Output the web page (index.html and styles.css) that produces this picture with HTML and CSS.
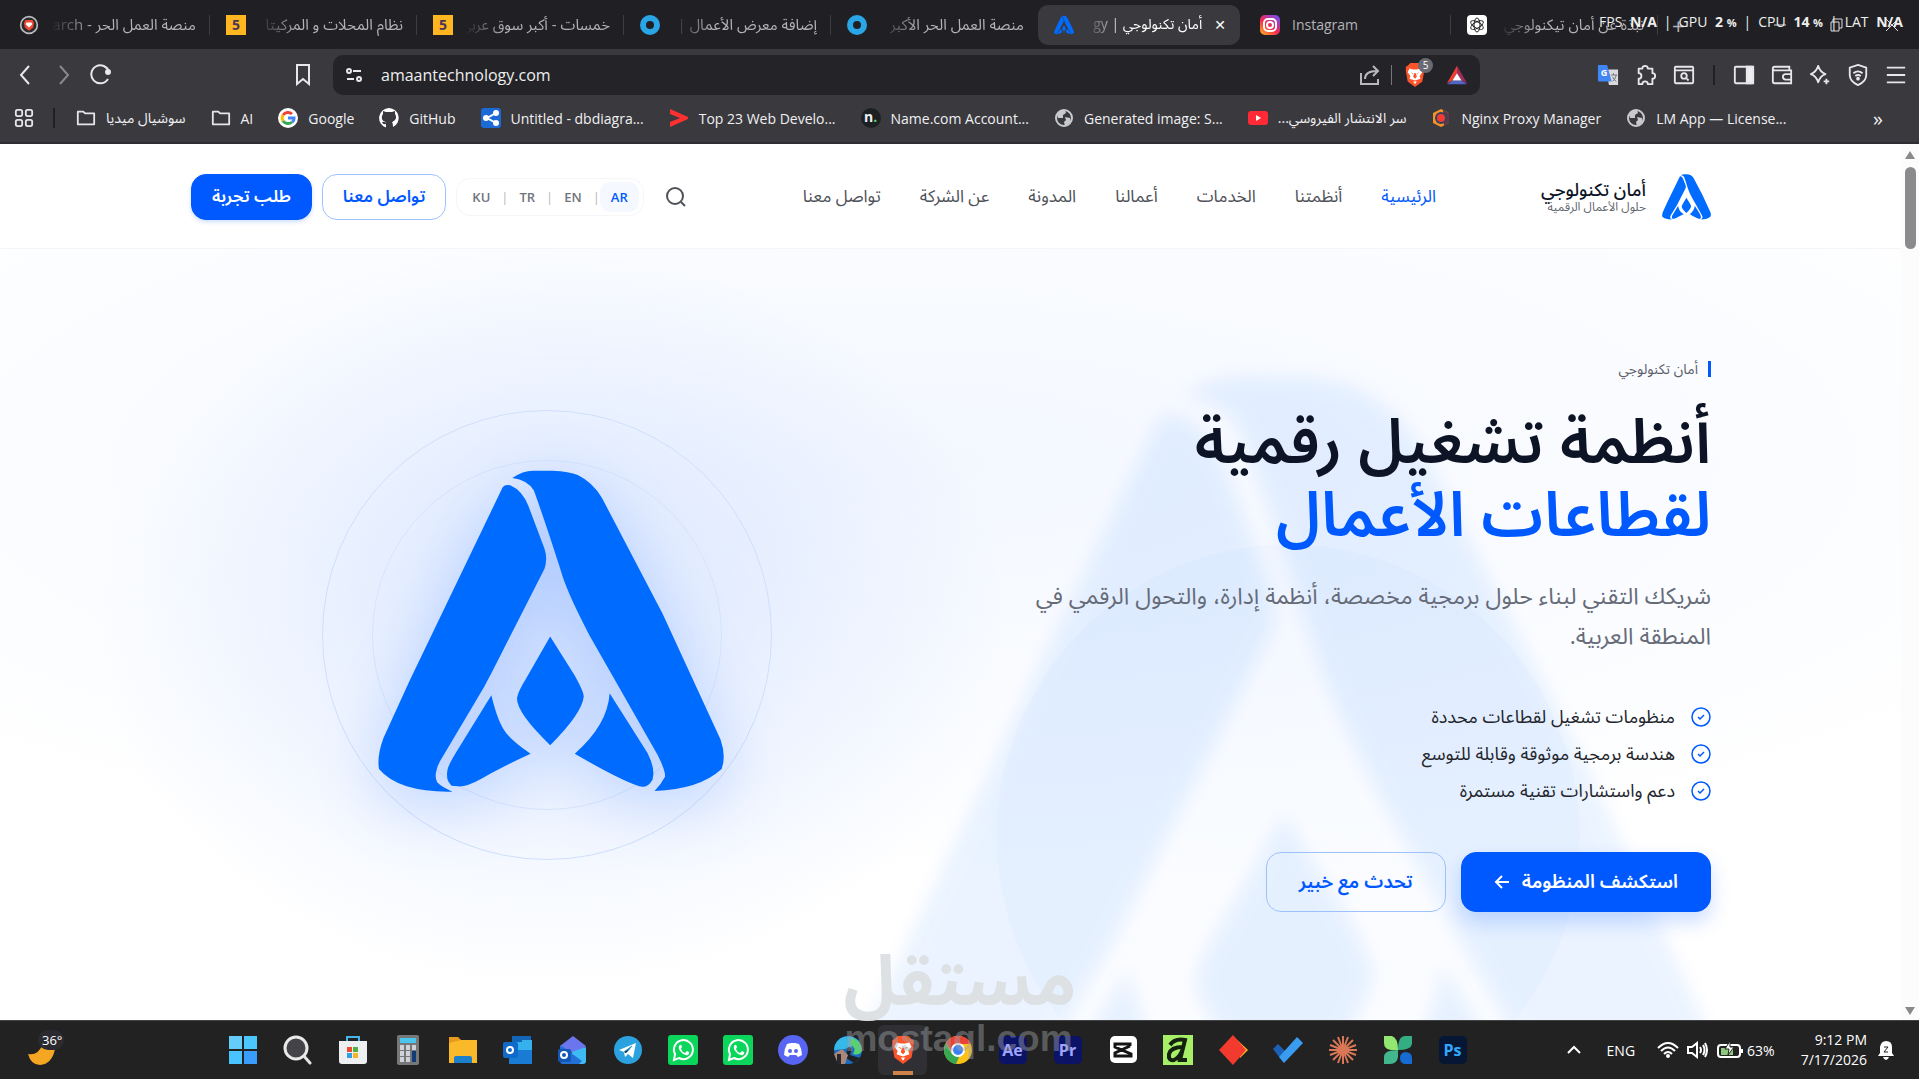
FILE: index.html
```
<!DOCTYPE html>
<html lang="ar">
<head>
  <meta charset="UTF-8">
  <meta name="viewport" content="width=device-width, initial-scale=1.0">
  <title>أمان تكنولوجي</title>
  <link rel="stylesheet" href="styles.css">
</head>
<body>
  <!-- Shared shapes -->
  <svg class="defs" aria-hidden="true">
    <symbol id="logo" viewBox="232 238 1045 972">
      <path d="M609 290Q616 280 632 284Q668 300 686 345L735 475Q745 505 735 535L575 850Q555 890 530 930L420 1115Q400 1155 412 1178Q425 1192 458 1206Q380 1208 320 1190Q265 1172 237 1138Q230 1100 250 1045L330 870Z"/>
      <path d="M638 262Q670 240 700 240L760 240Q810 242 835 253Q880 275 908 322L1090 670L1265 1050Q1282 1100 1268 1138Q1200 1200 1066 1204Q1085 1185 1098 1160Q1098 1140 1075 1095L870 735Q810 620 790 560C765 480 730 375 703 300Q685 268 638 262Z"/>
      <path d="M752 739L825 855Q853 905 853 920Q848 970 752 1066Q652 970 652 925Q655 905 680 865Z"/>
      <path d="M575 916Q595 1000 620 1030Q640 1055 693 1092Q610 1130 545 1167Q500 1192 475 1190L455 1188Q436 1170 443 1140Q446 1125 470 1086Z"/>
      <path d="M931 910L1045 1090Q1070 1140 1060 1170Q1045 1197 1020 1190Q960 1170 826 1092Q925 1005 931 910Z"/>
    </symbol>
    <symbol id="brave" viewBox="0 0 24 28">
      <path fill="#fb542b" d="M7 1h10l3 3 2 1v5l-2 11-8 6-8-6L2 10V5l2-1z"/>
      <path fill="#fff" d="M6 7l4 1h4l4-1 2 4-3 4 1 3-6 2-6-2 1-3-3-4zM10 21h4l-2 3z"/>
      <path fill="#fb542b" d="M7 11l3 1v1zM17 11l-3 1v1zM11 12h2l1 4-2 2-2-2z"/>
    </symbol>
    <symbol id="folder" viewBox="0 0 22 20">
      <path d="M2 17V3h6l2 2h10v12z" fill="none" stroke="#e6e6e8" stroke-width="2" stroke-linejoin="round"/>
    </symbol>
    <symbol id="globe" viewBox="0 0 20 20">
      <circle cx="10" cy="10" r="8" fill="#3a393e" stroke="#c9cacd" stroke-width="2"/>
      <path fill="#c9cacd" d="M3 6q4-5 8-4l1 3-3 2v3H4zM11 9l5 1 1 4-6 4-1-4 2-2z"/>
    </symbol>
    <symbol id="ring" viewBox="0 0 20 20">
      <circle cx="10" cy="10" r="7" fill="none" stroke="#2aa5e6" stroke-width="6"/>
    </symbol>
    <symbol id="check" viewBox="0 0 20 20">
      <circle cx="10" cy="10" r="9" fill="none" stroke="#0058ff" stroke-width="1.500"/>
      <path d="M7 10l2 2 4-4" fill="none" stroke="#0058ff" stroke-width="1.500"/>
    </symbol>
    <symbol id="whatsapp" viewBox="0 0 30 30">
      <rect width="30" height="30" rx="3" fill="#0bd55b"/>
      <path d="M6 25l1-6a9.500 9.500 0 1 1 4 4z" fill="none" stroke="#fff" stroke-width="2"/>
      <path d="M11 11q2-3 3 1l-1 2q1 3 4 4l2-2q4 1 1 4-4 1-7-3-3-3-2-6z" fill="#fff"/>
    </symbol>
  </svg>

  <!-- Browser tabs -->
  <div class="tabstrip">
    <button class="tab">
      <svg class="fav" viewBox="0 0 22 24"><circle cx="11" cy="12" r="10" fill="#2b2b2f" stroke="#b9babd" stroke-width="2"/><path fill="#f04b32" d="M7 6h8l2 3-1 6-5 4-5-4-1-6z"/><path fill="#fff" d="M8 9h6l1 2-4 4-4-4z"/></svg>
      <span class="tab-title" dir="rtl">منصة العمل الحر - arch</span>
    </button>
    <button class="tab">
      <span class="fav five">5</span>
      <span class="tab-title" dir="rtl">نظام المحلات و المركيتا</span>
    </button>
    <button class="tab">
      <span class="fav five">5</span>
      <span class="tab-title" dir="rtl">خمسات - أكبر سوق عربي</span>
    </button>
    <button class="tab">
      <svg class="fav"><use href="#ring"/></svg>
      <span class="tab-title" dir="rtl">إضافة معرض الأعمال |</span>
    </button>
    <button class="tab no-line">
      <svg class="fav"><use href="#ring"/></svg>
      <span class="tab-title" dir="rtl">منصة العمل الحر الأكبر</span>
    </button>
    <button class="tab active">
      <svg class="fav blue"><use href="#logo"/></svg>
      <span class="tab-title" dir="rtl">أمان تكنولوجي | gy</span>
      <span class="close">✕</span>
    </button>
    <button class="tab">
      <svg class="fav" viewBox="0 0 20 20"><defs><linearGradient id="ig" x1="0" y1="1" x2=".8" y2="0"><stop offset="0" stop-color="#ffb91a"/><stop offset=".5" stop-color="#f5274f"/><stop offset="1" stop-color="#7a4bf0"/></linearGradient></defs><rect width="20" height="20" rx="5" fill="url(#ig)"/><rect x="4" y="4" width="12" height="12" rx="4" fill="none" stroke="#fff" stroke-width="2"/><circle cx="10" cy="10" r="3" fill="none" stroke="#fff" stroke-width="2"/></svg>
      <span class="tab-title ltr">Instagram</span>
    </button>
    <button class="tab">
      <svg class="fav" viewBox="0 0 20 20"><rect width="20" height="20" rx="4" fill="#fff"/><g fill="none" stroke="#222"><ellipse cx="10" cy="10" rx="3" ry="7"/><ellipse cx="10" cy="10" rx="3" ry="7" transform="rotate(60 10 10)"/><ellipse cx="10" cy="10" rx="3" ry="7" transform="rotate(120 10 10)"/></g></svg>
      <span class="tab-title" dir="rtl">نبذة عن أمان تيكنولوجي</span>
    </button>
    <button class="newtab" aria-label="New tab">+</button>
    <div class="window-controls">
      <button aria-label="Minimize"><svg viewBox="0 0 14 14"><path d="M1 7h12"/></svg></button>
      <button aria-label="Restore"><svg viewBox="0 0 14 14"><path d="M2 4h8v9H2zM4 4V1h9v9h-3"/></svg></button>
      <button aria-label="Close"><svg viewBox="0 0 14 14"><path d="M1 1l12 12M13 1L1 13"/></svg></button>
    </div>
    <div class="stats">
      <span>FPS <b>N/A</b></span><i>|</i><span>GPU <b>2 <small>%</small></b></span><i>|</i><span>CPU <b>14 <small>%</small></b></span><i>|</i><span>LAT <b>N/A</b></span>
    </div>
  </div>

  <!-- Address bar -->
  <div class="toolbar">
    <div class="nav-buttons">
      <button aria-label="Back"><svg viewBox="0 0 22 22"><path d="M14 2l-8 9 8 9"/></svg></button>
      <button class="dim" aria-label="Forward"><svg viewBox="0 0 22 22"><path d="M8 2l8 9-8 9"/></svg></button>
      <button aria-label="Reload"><svg viewBox="0 0 22 22"><path d="M19 15a9 9 0 1 1 1-7"/><circle cx="19" cy="8" r="2" fill="#eee"/></svg></button>
    </div>
    <button class="save" aria-label="Bookmark"><svg viewBox="0 0 22 22"><path d="M5 1h12v19l-6-5-6 5z"/></svg></button>
    <div class="address">
      <svg viewBox="0 0 18 18"><circle cx="4" cy="5" r="2"/><path d="M8 5h8M2 13h7"/><circle cx="14" cy="13" r="2"/></svg>
      <input type="text" value="amaantechnology.com" aria-label="Address">
      <svg class="share" viewBox="0 0 22 22"><path d="M2 9v11h17v-5M6 15q0-8 12-8M14 2l5 5-5 5"/></svg>
      <span class="bar"></span>
      <span class="shield"><svg viewBox="0 0 24 28"><use href="#brave"/></svg><em>5</em></span>
      <svg class="bat" viewBox="0 0 24 22"><path fill="#ee3d32" stroke="none" d="M12 1v8L7 17l-6 3z"/><path fill="#9e2d5b" stroke="none" d="M12 1l11 19-6-3-5-8z"/><path fill="#5265c4" stroke="none" d="M1 21l6-4h10l6 4z"/><path fill="#fff" stroke="none" d="M12 9l5 8H7z"/></svg>
    </div>
    <div class="extensions">
      <button aria-label="Translate"><svg viewBox="0 0 24 24"><path fill="#d9dadc" stroke="none" d="M10 6h13v17H13z"/><path fill="#4285f4" stroke="none" d="M1 1h10l5 18H2q-1 0-1-1z"/><text x="4" y="13" class="icon-text">G</text><path d="M15 12h7M18 10v2M21 12q-1 5-4 7M17 14q1 3 4 5" stroke="#6b7075" stroke-width="1"/></svg></button>
      <button aria-label="Extensions"><svg viewBox="0 0 24 24"><path d="M4 5h4q0-3 3-3t3 3h5v5q3 0 3 3t-3 3v6h-5q0-3-3-3t-3 3H4v-6q3 0 3-3t-3-3z" stroke-linejoin="round"/></svg></button>
      <button aria-label="Reader"><svg viewBox="0 0 24 24"><rect x="2" y="3" width="20" height="18" rx="1"/><path d="M2 7h20M15 16l2 2"/><circle cx="12" cy="13" r="3"/></svg></button>
      <span class="bar dark"></span>
      <button aria-label="Sidebar"><svg viewBox="0 0 24 24"><rect x="2" y="3" width="20" height="18" rx="1"/><path fill="#eee" d="M15 3h7v18h-7z"/></svg></button>
      <button aria-label="Wallet"><svg viewBox="0 0 24 24"><path d="M2 4v15q0 2 2 2h18V7H4q-2 0-2-2t2-2h16v4M22 11h-6q-3 0-3 3t3 3h6"/></svg></button>
      <button aria-label="Leo"><svg viewBox="0 0 24 24"><path d="M10 2q2 7 8 9-6 2-8 9-2-7-8-9 6-2 8-9zM19 16v6M16 19h6" stroke-linejoin="round"/></svg></button>
      <button aria-label="VPN"><svg viewBox="0 0 24 24"><path d="M12 1l9 3v8q0 7-9 11-9-4-9-11V4z"/><path d="M7 10q5-4 10 0M9 13q3-2 6 0"/><circle cx="12" cy="16" r="1"/></svg></button>
      <button aria-label="Menu"><svg viewBox="0 0 24 24"><path d="M2 4h20M2 12h20M2 20h20"/></svg></button>
    </div>
  </div>

  <!-- Bookmarks -->
  <div class="bookmarks">
    <button class="apps" aria-label="Apps"><svg viewBox="0 0 22 22" fill="none" stroke="#e6e6e8" stroke-width="2"><rect x="2" y="2" width="7" height="7" rx="2"/><rect x="13" y="2" width="7" height="7" rx="2"/><rect x="2" y="13" width="7" height="7" rx="2"/><rect x="13" y="13" width="7" height="7" rx="2"/></svg></button>
    <span class="bar dark"></span>
    <a href="#" class="bm"><svg><use href="#folder"/></svg><span dir="rtl">سوشيال ميديا</span></a>
    <a href="#" class="bm"><svg><use href="#folder"/></svg>AI</a>
    <a href="#" class="bm"><svg viewBox="0 0 20 20"><circle cx="10" cy="10" r="10" fill="#fff"/><g fill="none" stroke-width="3"><path stroke="#ea4335" d="M5 7a6 6 0 0 1 9-1"/><path stroke="#fbbc05" d="M5 13a6 6 0 0 1 0-6"/><path stroke="#34a853" d="M5 13a6 6 0 0 0 9 1"/><path stroke="#4285f4" d="M10 10h6q0 3-2 4"/></g></svg>Google</a>
    <a href="#" class="bm"><svg viewBox="0 0 20 20"><path fill="#fff" d="M10 0a10 10 0 0 0-3 19.500V16q-3 1-4-2 3 2 4 0-5-1-4-6l1-2V3l3 1h6l3-1v3q3 5-3 8 1 1 1 5A10 10 0 0 0 10 0z"/><path fill="#3a393e" d="M7 19v-3q-3 0-4-2 2-1 4 1v-1q-5-2-3-7V4l3 1h6l3-1v3q2 5-3 7v5z"/></svg>GitHub</a>
    <a href="#" class="bm"><svg viewBox="0 0 20 20"><rect width="20" height="20" rx="3" fill="#1c6ad6"/><path d="M15 5L6 10l9 5" stroke="#fff" stroke-width="2" fill="none"/><g fill="#fff"><circle cx="5" cy="10" r="3"/><circle cx="15" cy="5" r="3"/><circle cx="15" cy="15" r="3"/></g></svg>Untitled - dbdiagra...</a>
    <a href="#" class="bm"><svg viewBox="0 0 20 20"><path fill="#ff3130" d="M1 1l18 8v2L1 19v-5l10-4L1 6z"/></svg>Top 23 Web Develo...</a>
    <a href="#" class="bm"><span class="n-icon">n<i>.</i></span>Name.com Account...</a>
    <a href="#" class="bm"><svg><use href="#globe"/></svg>Generated image: S...</a>
    <a href="#" class="bm"><svg viewBox="0 0 20 20"><rect y="3" width="20" height="14" rx="3" fill="#ff2a35"/><path fill="#fff" d="M8 7l5 3-5 3z"/></svg><span dir="rtl">سر الانتشار الفيروسي...</span></a>
    <a href="#" class="bm"><svg viewBox="0 0 20 20"><path fill="#f39325" d="M10 1l8 4v10l-8 4-8-4V5z"/><path fill="#5b3a45" d="M12 2l6 3v10l-5 3z"/><circle cx="10" cy="10" r="6" fill="#35405e"/><circle cx="10" cy="10" r="4" fill="#f33b30"/></svg>Nginx Proxy Manager</a>
    <a href="#" class="bm"><svg><use href="#globe"/></svg>LM App — License...</a>
    <button class="more" aria-label="More bookmarks">»</button>
  </div>

  <!-- Website -->
  <div class="viewport">
    <div class="site" dir="rtl">
      <header class="site-header">
        <a href="#" class="brand">
          <svg class="brand-logo"><use href="#logo"/></svg>
          <span><strong>أمان تكنولوجي</strong><small>حلول الأعمال الرقمية</small></span>
        </a>
        <nav class="site-nav">
          <a href="#" class="current">الرئيسية</a>
          <a href="#">أنظمتنا</a>
          <a href="#">الخدمات</a>
          <a href="#">أعمالنا</a>
          <a href="#">المدونة</a>
          <a href="#">عن الشركة</a>
          <a href="#">تواصل معنا</a>
        </nav>
        <div class="actions">
          <button class="search" aria-label="بحث"><svg viewBox="0 0 20 20"><circle cx="9" cy="9" r="8"/><path d="M15 15l4 4"/></svg></button>
          <div class="langs">
            <button class="on">AR</button><i>|</i><button>EN</button><i>|</i><button>TR</button><i>|</i><button>KU</button>
          </div>
          <button class="btn outline small">تواصل معنا</button>
          <button class="btn primary small">طلب تجربة</button>
        </div>
      </header>

      <main class="hero">
        <svg class="hero-bg" viewBox="232 238 1045 972"><use class="ghost" href="#logo" x="232" y="238" width="1045" height="972"/><circle cx="757" cy="763" r="332"/></svg>
        <section class="hero-text">
          <p class="eyebrow">أمان تكنولوجي</p>
          <h1>أنظمة تشغيل رقمية <span>لقطاعات الأعمال</span></h1>
          <p class="lead">شريكك التقني لبناء حلول برمجية مخصصة، أنظمة إدارة، والتحول الرقمي في المنطقة العربية.</p>
          <ul class="points">
            <li><svg><use href="#check"/></svg>منظومات تشغيل لقطاعات محددة</li>
            <li><svg><use href="#check"/></svg>هندسة برمجية موثوقة وقابلة للتوسع</li>
            <li><svg><use href="#check"/></svg>دعم واستشارات تقنية مستمرة</li>
          </ul>
          <div class="cta">
            <button class="btn primary">استكشف المنظومة <svg viewBox="0 0 16 16"><path d="M15 8H2M8 2L2 8l6 6"/></svg></button>
            <button class="btn outline">تحدث مع خبير</button>
          </div>
        </section>
        <div class="hero-art">
          <div class="circle"><div class="circle inner"></div></div>
          <svg class="hero-logo"><use href="#logo"/></svg>
        </div>
      </main>
    </div>
    <div class="scrollbar">
      <svg viewBox="0 0 12 10"><path d="M6 1l5 8H1z"/></svg>
      <span class="thumb"></span>
      <svg class="down" viewBox="0 0 12 10"><path d="M6 9L1 1h10z"/></svg>
    </div>
  </div>

  <!-- Taskbar -->
  <footer class="taskbar">
    <div class="weather">
      <svg viewBox="0 0 30 24"><path fill="#f5a623" d="M1 12q10 2 15-10 10 0 12 5-3 15-15 16Q4 23 1 12z"/></svg>
      <span>36°</span>
    </div>
    <div class="apps-row">
      <button aria-label="Start"><svg viewBox="0 0 30 30"><path fill="#64cdfb" d="M1 1h13v13H1z"/><path fill="#4cc6ff" d="M16 1h13v13H16z"/><path fill="#48c3ff" d="M1 16h13v13H1z"/><path fill="#3b9dfb" d="M16 16h13v13H16z"/></svg></button>
      <button aria-label="Search"><svg viewBox="0 0 30 30"><path d="M20 20l7 8" stroke="#e4e4e4" stroke-width="3" stroke-linecap="round"/><circle cx="13" cy="13" r="11" fill="#444347" stroke="#e9e9e9" stroke-width="3"/></svg></button>
      <button aria-label="Store"><svg viewBox="0 0 30 30"><path d="M9 7V2h12v5" fill="none" stroke="#46b5e8" stroke-width="2"/><path fill="#eeeff1" d="M1 6h28v20q0 3-3 3H4q-3 0-3-3z"/><path fill="#f04a33" d="M9 12h5v5H9z"/><path fill="#50b041" d="M15 12h5v5h-5z"/><path fill="#2f9fe8" d="M9 18h5v5H9z"/><path fill="#f5b42b" d="M15 18h5v5h-5z"/></svg></button>
      <button aria-label="Calculator"><svg viewBox="0 0 30 30"><rect x="4" width="22" height="30" rx="2" fill="#757779"/><path fill="#4bc5ee" d="M7 3h16v5H7z"/><path fill="#cfd2d6" d="M7 10h4v5H7zM13 10h4v5h-4zM19 10h4v5h-4zM7 16h4v5H7zM13 16h4v5h-4zM7 22h4v5H7zM13 22h4v5h-4z"/><path fill="#103c78" d="M19 16h4v11h-4z"/></svg></button>
      <button aria-label="Files"><svg viewBox="0 0 30 30"><path fill="#e79a1e" d="M1 2h9l3 3v6H1z"/><path fill="#f9b928" d="M1 8l12-3h16v23H1z"/><path fill="#1c7fc9" d="M6 28v-5q0-2 2-2h14q2 0 2 2v5z"/></svg></button>
      <button aria-label="Outlook"><svg viewBox="0 0 30 30"><path fill="#1365b8" d="M9 1h19v8H9z"/><path fill="#35b2ee" d="M9 7h10v10H9zM19 5h10v12H19z"/><path fill="#1a7bd4" d="M6 15h23v14H6z"/><rect y="7" width="15" height="16" rx="2" fill="#1169c9"/><circle cx="7" cy="15" r="3" fill="none" stroke="#fff" stroke-width="2"/></svg></button>
      <button aria-label="Outlook new"><svg viewBox="0 0 30 30"><path fill="#6b75ee" d="M2 11L15 1l13 10-9 9z"/><path fill="#3fbbf4" d="M28 12v14q0 3-3 3H8l6-12z"/><path fill="#2371d6" d="M2 10l22 16-3 3H5q-3 0-3-3z"/><rect y="14" width="13" height="13" rx="2" fill="#1358b8"/><circle cx="6" cy="20" r="3" fill="none" stroke="#fff" stroke-width="2"/></svg></button>
      <button aria-label="Telegram"><svg viewBox="0 0 30 30"><circle cx="15" cy="15" r="14" fill="#2ba2df"/><path fill="#fff" d="M6 15l17-7-3 15-5-4-3 3-1-5z"/><path stroke="#2ba2df" d="M11 17l8-6-6 7"/></svg></button>
      <button aria-label="WhatsApp"><svg><use href="#whatsapp"/></svg></button>
      <button aria-label="WhatsApp 2"><svg><use href="#whatsapp"/></svg></button>
      <button aria-label="Discord"><svg viewBox="0 0 30 30"><circle cx="15" cy="15" r="15" fill="#5865f2"/><path fill="#fff" d="M9 9l4-1h4l4 1q3 5 3 11l-4 2-2-2h-6l-2 2-4-2q0-6 3-11z"/><circle cx="12" cy="16" r="2" fill="#5865f2"/><circle cx="18" cy="16" r="2" fill="#5865f2"/></svg></button>
      <button aria-label="Edge"><svg viewBox="0 0 30 30"><circle cx="15" cy="15" r="14" fill="#1b6bc0"/><path fill="#35b9e8" d="M1 15a14 14 0 0 1 26-7L12 14z"/><path fill="#54d36f" d="M18 3q11 2 11 13-3 5-9 3 4-6-3-10z"/><path fill="#202124" d="M14 14q1-4 5 0l-2 6 10 3-6 5-8-5z"/><path fill="#a88878" d="M1 19l8-5 6 6-3 9H5z"/><path fill="#29262d" d="M4 19h4v10H4z"/></svg></button>
      <button class="running" aria-label="Brave"><svg viewBox="0 0 24 28"><use href="#brave"/></svg></button>
      <button aria-label="Chrome"><svg viewBox="0 0 30 30"><circle cx="15" cy="15" r="14" fill="#fbc116"/><path fill="#ea4335" d="M3 8a14 14 0 0 1 25 1H15l-6 8z"/><path fill="#34a853" d="M3 8l6 11 7 3-3 7A14 14 0 0 1 3 8z"/><circle cx="15" cy="15" r="7" fill="#fff"/><circle cx="15" cy="15" r="5" fill="#3b82f6"/></svg></button>
      <button aria-label="After Effects"><span class="adobe">Ae</span></button>
      <button aria-label="Premiere"><span class="adobe">Pr</span></button>
      <button aria-label="CapCut"><svg viewBox="0 0 30 30"><rect x="2" y="1" width="27" height="27" rx="5" fill="#fff"/><path d="M22 11V9H7v3l16 7v2H7v-3l15-7" fill="none" stroke="#151515" stroke-width="3"/></svg></button>
      <button aria-label="Affinity"><svg viewBox="0 0 30 30"><path fill="#a6ef67" d="M0 0h30v30H0z"/><path d="M7 10q5-7 15-5L17 25h7M20 12Q8 12 6 19q-1 7 5 6 5-2 8-9" fill="none" stroke="#14210f" stroke-width="4"/></svg></button>
      <button aria-label="Diamond"><svg viewBox="0 0 30 30"><path fill="#fbb928" d="M15 1l15 14-8 8z"/><path fill="#f23a2f" d="M15 0l13 15-13 15L1 15z"/></svg></button>
      <button aria-label="To Do"><svg viewBox="0 0 30 30"><path fill="#1b5fb6" d="M0 14l5-5 11 11-6 7z"/><path fill="#3a9cf0" d="M24 2l6 6-19 20-5-6z"/></svg></button>
      <button aria-label="Claude"><svg viewBox="0 0 30 30"><path d="M15 1v28M1 15h28M5 5l20 20M25 5L5 25M10 2l10 26M20 2L10 28M2 10l26 10M2 20l26-10" stroke="#d97757" stroke-width="2"/><circle cx="15" cy="15" r="5" fill="#d97757"/></svg></button>
      <button aria-label="Clover"><svg viewBox="0 0 30 30"><path fill="#91e770" d="M1 1h8q6 2 6 14H8Q1 14 1 8z"/><path fill="#35ad83" d="M29 1v8q-1 6-14 6Q15 1 22 1z"/><path fill="#42b68c" d="M15 15v7q-1 7-8 7H1v-7q0-7 14-7z"/><path fill="#176cd3" d="M22 17q7 0 7 6v6h-6q-6 0-6-6 0-5 5-6z"/></svg></button>
      <button aria-label="Photoshop"><span class="adobe ps">Ps</span></button>
    </div>
    <div class="tray">
      <svg class="chev" viewBox="0 0 14 10"><path d="M1 8l6-6 6 6"/></svg>
      <span class="eng">ENG</span>
      <svg viewBox="0 0 22 18"><path d="M1 7q10-10 20 0M4 10q7-7 14 0M7 13q4-4 8 0"/><circle cx="11" cy="15" r="1"/></svg>
      <svg viewBox="0 0 22 18"><path d="M1 6h4l5-4v14l-5-4H1zM13 6q2 3 0 6M16 4q3 5 0 10M18 2q4 7 0 14"/></svg>
      <svg class="battery" viewBox="0 0 28 18"><rect x="1" y="4" width="22" height="12" rx="3"/><path fill="#8cc97c" stroke="none" d="M4 7h12v7H4z"/><path d="M25 8v4"/><path fill="#fff" stroke="#222" stroke-width="1" d="M13 0l-5 8h4l-1 6 6-8h-4z"/></svg>
      <span class="percent">63%</span>
      <div class="clock"><span>9:12 PM</span><span>7/17/2026</span></div>
      <svg class="bell" viewBox="0 0 18 22"><path fill="#fff" stroke="none" d="M1 17l2-3V8q1-6 6-6 6 0 6 6v6l2 3zM6 18h6q-1 3-3 3t-3-3z"/><path stroke="#222" stroke-width="1" d="M7 8h4l-4 5h4"/></svg>
    </div>
  </footer>

  <div class="watermark" aria-hidden="true"><b lang="ar">مستقل</b><span>mostaql.com</span></div>
</body>
</html>
```
FILE: styles.css
```
/* Reset */
* {
  margin: 0;
  padding: 0;
  box-sizing: border-box;
}

body {
  height: 100vh;
  display: flex;
  flex-direction: column;
  overflow: hidden;
  font-family: "Open Sans", "Noto Sans Arabic", "DejaVu Sans", sans-serif;
  font-size: 14px;
  color: #0d1426;
  background: #fff;
}

button {
  font: inherit;
  color: inherit;
  background: none;
  border: none;
  cursor: pointer;
}

a {
  color: inherit;
  text-decoration: none;
}

ul {
  list-style: none;
}

i,
em {
  font-style: normal;
}

.defs {
  position: absolute;
  width: 0;
  height: 0;
}

/* Tabs */
.tabstrip {
  position: relative;
  display: flex;
  align-items: center;
  height: 49px;
  padding-left: 3px;
  background: #202024;
  color: #b3b3b7;
  flex-shrink: 0;
}

.tab {
  display: flex;
  align-items: center;
  gap: 12px;
  width: 207px;
  height: 40px;
  padding: 0 14px 0 16px;
  background: linear-gradient(#3c3c42, #3c3c42) right center / 1px 20px no-repeat;
  flex-shrink: 0;
}

.tab.no-line {
  background: none;
}

.tab.active {
  width: 202px;
  margin-right: 4px;
  background: #3a393e;
  border-radius: 10px;
  color: #fff;
}

.fav {
  width: 20px;
  height: 20px;
  flex-shrink: 0;
}

.blue {
  fill: #006cff;
}

.five {
  background: #ffb61f;
  color: #4a3557;
  font-weight: bold;
  line-height: 20px;
}

.tab-title {
  flex: 1;
  overflow: hidden;
  white-space: nowrap;
  text-align: right;
  font-size: 15px;
  -webkit-mask-image: linear-gradient(to right, transparent, #000 40px);
  mask-image: linear-gradient(to right, transparent, #000 40px);
}

.active .tab-title,
.tab-title.ltr {
  font-size: 14px;
}

.tab-title.ltr {
  text-align: left;
  -webkit-mask-image: none;
  mask-image: none;
}

.close {
  font-size: 14px;
  font-weight: bold;
}

.newtab {
  padding: 0 14px;
  font-size: 22px;
}

.window-controls {
  display: flex;
  gap: 42px;
  margin-left: auto;
  padding-right: 20px;
}

.window-controls svg {
  width: 14px;
  height: 14px;
  fill: none;
  stroke: #ddd;
  display: block;
}

.stats {
  position: absolute;
  top: 12px;
  right: 16px;
  display: flex;
  gap: 7px;
  font-size: 14px;
  line-height: 20px;
  color: #eee;
}

.stats b {
  padding-left: 4px;
}

.stats small {
  font-size: 11px;
}

/* Toolbar */
.toolbar {
  display: flex;
  align-items: center;
  height: 52px;
  padding: 0 12px 0 15px;
  background: #3a393e;
  flex-shrink: 0;
}

.toolbar svg {
  display: block;
  width: 22px;
  height: 22px;
  fill: none;
  stroke: #e8e8ea;
  stroke-width: 2;
}

.nav-buttons {
  display: flex;
  gap: 15px;
}

.dim {
  opacity: .45;
}

.save {
  margin-left: 181px;
}

.address {
  display: flex;
  align-items: center;
  flex: 1;
  height: 40px;
  margin: 0 117px 0 19px;
  padding: 0 12px;
  border-radius: 10px;
  background: #232328;
}

.address > svg:first-child {
  width: 18px;
  height: 18px;
}

.toolbar .share {
  stroke: #b9b9bd;
}

.address input {
  flex: 1;
  margin-left: 18px;
  border: none;
  outline: none;
  background: none;
  color: #eee;
  font-family: "Open Sans", sans-serif;
  font-size: 16px;
}

.bar {
  width: 1px;
  height: 20px;
  margin: 0 12px 0 10px;
  background: #75757b;
}

.bar.dark {
  width: 2px;
  margin: 0 2px;
  background: #202024;
}

.shield {
  position: relative;
}

.toolbar .shield svg {
  height: 26px;
  stroke: none;
}

.shield em {
  position: absolute;
  top: -4px;
  left: 14px;
  width: 15px;
  height: 15px;
  border-radius: 50%;
  background: #6a6b72;
  color: #fff;
  font-size: 10px;
  line-height: 15px;
  text-align: center;
}

.bat {
  margin-left: 20px;
}

.extensions {
  display: flex;
  align-items: center;
  gap: 16px;
}

.icon-text {
  fill: #fff;
  stroke: none;
  font-size: 10px;
  font-weight: bold;
}

/* Bookmarks */
.bookmarks {
  display: flex;
  align-items: center;
  gap: 25px;
  height: 43px;
  padding: 0 36px 7px 14px;
  background: #3a393e;
  border-bottom: 2px solid #2e2d33;
  color: #f0f0f2;
  white-space: nowrap;
  flex-shrink: 0;
}

.bm {
  display: flex;
  align-items: center;
  gap: 10px;
}

.bookmarks svg {
  display: block;
  width: 20px;
  height: 20px;
}

.bookmarks .bar {
  margin: 0 -4px 0 -6px;
}

.n-icon {
  width: 20px;
  height: 20px;
  border-radius: 50%;
  background: #1d2023;
  font-weight: bold;
  line-height: 17px;
  text-align: center;
}

.n-icon i {
  color: #5fd07a;
}

.more {
  margin-left: auto;
  font-size: 20px;
}

/* Page area */
.viewport {
  display: flex;
  flex: 1;
  min-height: 0;
}

.site {
  flex: 1;
  display: flex;
  flex-direction: column;
  overflow: hidden;
}

.scrollbar {
  width: 18px;
  display: flex;
  flex-direction: column;
  align-items: center;
  padding: 6px 0 4px;
  background: #fcfcfc;
}

.scrollbar svg {
  width: 12px;
  height: 10px;
  fill: #8a8a8d;
}

.thumb {
  width: 11px;
  height: 82px;
  margin-top: 7px;
  border-radius: 6px;
  background: #8a8a8d;
}

.scrollbar .down {
  margin-top: auto;
}

/* Site header */
.site-header {
  display: flex;
  align-items: center;
  justify-content: space-between;
  height: 105px;
  padding: 2px 190px 0 191px;
  border-bottom: 1px solid #f5f5f7;
  background: #fff;
  flex-shrink: 0;
}

.brand {
  display: flex;
  align-items: center;
  gap: 16px;
}

.brand-logo {
  width: 49px;
  height: 46px;
  fill: #006cff;
}

.brand strong,
.brand small {
  display: block;
  white-space: nowrap;
}

.brand strong {
  font-size: 18px;
  font-weight: 500;
  line-height: 20px;
}

.brand small {
  font-size: 12px;
  line-height: 16px;
  color: #62666f;
}

.site-nav {
  display: flex;
  gap: 39px;
  margin-left: 12px;
  font-size: 17px;
  color: #4e5158;
  white-space: nowrap;
}

.site-nav .current {
  color: #0058ff;
}

.actions {
  display: flex;
  align-items: center;
  gap: 10px;
}

.search {
  margin-left: 12px;
}

.search svg {
  display: block;
  width: 20px;
  height: 20px;
  fill: none;
  stroke: #4e5158;
  stroke-width: 2;
}

.langs {
  display: flex;
  align-items: center;
  height: 38px;
  padding: 0 4px;
  border: 1px solid #f5f6f8;
  border-radius: 14px;
  font-size: 13px;
  font-weight: 600;
  color: #70747c;
}

.langs button {
  height: 30px;
  padding: 0 11px;
  border-radius: 10px;
}

.langs .on {
  background: #f5f8fe;
  color: #0058ff;
}

.langs i {
  font-weight: normal;
  color: #b5b8be;
}

.btn {
  display: flex;
  align-items: center;
  justify-content: center;
  gap: 12px;
  height: 60px;
  padding: 0 31px;
  border: 1px solid #9fc1fb;
  border-radius: 15px;
  color: #0058ff;
  font-size: 19px;
  font-weight: 600;
  white-space: nowrap;
}

.btn.primary {
  border-color: #0058ff;
  background: #0058ff;
  color: #fff;
  box-shadow: 0 10px 20px rgba(0, 88, 255, .2);
}

.btn.small {
  height: 46px;
  padding: 0 20px;
  font-size: 17px;
}

.btn.small.primary {
  box-shadow: 0 2px 4px rgba(0, 88, 255, .2);
}

.btn svg {
  width: 16px;
  height: 16px;
  fill: none;
  stroke: #fff;
  stroke-width: 2;
}

/* Hero */
.hero {
  position: relative;
  flex: 1;
  display: flex;
  justify-content: space-between;
  padding: 112px 190px 0;
  overflow: hidden;
  background:
    radial-gradient(ellipse 24% 48% at 29% 48%, rgba(0, 88, 255, .12), transparent),
    radial-gradient(ellipse 70% 55% at 48% 28%, #f3f7ff, transparent),
    #fff;
}

.hero-bg {
  position: absolute;
  top: 126px;
  right: 156px;
  width: 918px;
  height: 854px;
  overflow: visible;
  fill: #0070ff;
}

.hero-bg .ghost {
  opacity: .08;
  filter: blur(10px);
}

.hero-bg circle {
  fill: #1463ff;
  opacity: .02;
}

.hero-text {
  position: relative;
  width: 700px;
}

.eyebrow {
  padding-right: 10px;
  border-right: 3px solid #0058ff;
  font-size: 14px;
  line-height: 16px;
  color: #5b606c;
}

.hero h1 {
  margin-top: 26px;
  font-size: 62px;
  font-weight: 600;
  line-height: 73px;
}

.hero h1 span {
  display: block;
  color: #0058ff;
}

.lead {
  margin-top: 26px;
  font-size: 23px;
  line-height: 40px;
  color: #666b78;
}

.points {
  margin-top: 43px;
  font-size: 18px;
  color: #23252c;
}

.points li {
  display: flex;
  align-items: center;
  gap: 16px;
  height: 37px;
}

.points svg {
  width: 20px;
  height: 20px;
}

.cta {
  display: flex;
  gap: 15px;
  margin-top: 43px;
}

.cta .btn {
  padding: 0 32px;
}

.hero-art {
  position: relative;
  align-self: flex-start;
  display: grid;
  place-items: center;
  width: 450px;
  height: 450px;
  margin: 49px 0 0 132px;
}

.circle {
  grid-area: 1 / 1;
  display: grid;
  place-items: center;
  width: 450px;
  height: 450px;
  border: 1px solid #cfe0fb;
  border-radius: 50%;
}

.circle.inner {
  width: 350px;
  height: 350px;
  opacity: .7;
}

.hero-logo {
  grid-area: 1 / 1;
  width: 348px;
  height: 323px;
  margin: 0 0 8px 8px;
  fill: #006cff;
  filter: drop-shadow(0 16px 32px rgba(0, 88, 255, .22));
}

/* Taskbar */
.taskbar {
  display: flex;
  align-items: center;
  height: 59px;
  background: #222;
  border-top: 1px solid #444;
  color: #fff;
  flex-shrink: 0;
}

.weather {
  position: relative;
  width: 215px;
  height: 40px;
}

.weather svg {
  position: absolute;
  left: 27px;
  top: 12px;
  width: 30px;
  height: 24px;
}

.weather span {
  position: absolute;
  left: 38px;
  top: 0;
  padding: 0 2px 0 4px;
  border-radius: 10px;
  background: #2b2a30;
  font-size: 13px;
  line-height: 20px;
}

.apps-row {
  display: flex;
}

.apps-row button {
  display: grid;
  place-items: center;
  width: 55px;
  height: 50px;
}

.apps-row svg {
  width: 30px;
  height: 30px;
}

.apps-row .running {
  width: 49px;
  margin: 0 3px;
  border-radius: 6px;
  background: linear-gradient(#cf834a, #cf834a) center bottom / 20px 4px no-repeat, #303034;
}

.adobe {
  width: 28px;
  height: 28px;
  border-radius: 5px;
  background: #0b1366;
  color: #9fa4ff;
  font-size: 16px;
  font-weight: bold;
  line-height: 28px;
}

.adobe.ps {
  background: #061735;
  color: #31a8ff;
}

.tray {
  display: flex;
  align-items: center;
  gap: 8px;
  margin-left: auto;
  padding-right: 24px;
}

.tray svg {
  width: 22px;
  height: 18px;
  fill: none;
  stroke: #fff;
  stroke-width: 2;
}

.tray .chev {
  width: 14px;
  height: 10px;
}

.eng {
  margin: 0 14px 0 18px;
}

.tray .battery {
  width: 28px;
}

.percent {
  margin-left: -6px;
}

.clock {
  margin-left: 18px;
  line-height: 20px;
  text-align: right;
}

.clock span {
  display: block;
}

.tray .bell {
  width: 18px;
  height: 22px;
  margin-left: 2px;
}

/* Watermark */
.watermark {
  position: absolute;
  left: 50%;
  bottom: 20px;
  width: 230px;
  margin-left: -116px;
  color: rgba(160, 164, 168, .45);
  text-align: center;
  white-space: nowrap;
  pointer-events: none;
}

.watermark b {
  display: block;
  color: #dde1e3;
  font-family: "Noto Sans Arabic", "Noto Sans", sans-serif;
  font-size: 70px;
  line-height: 72px;
}

.watermark span {
  display: block;
  font-family: "Liberation Sans", sans-serif;
  font-size: 37px;
  font-weight: bold;
  line-height: 40px;
}
```
